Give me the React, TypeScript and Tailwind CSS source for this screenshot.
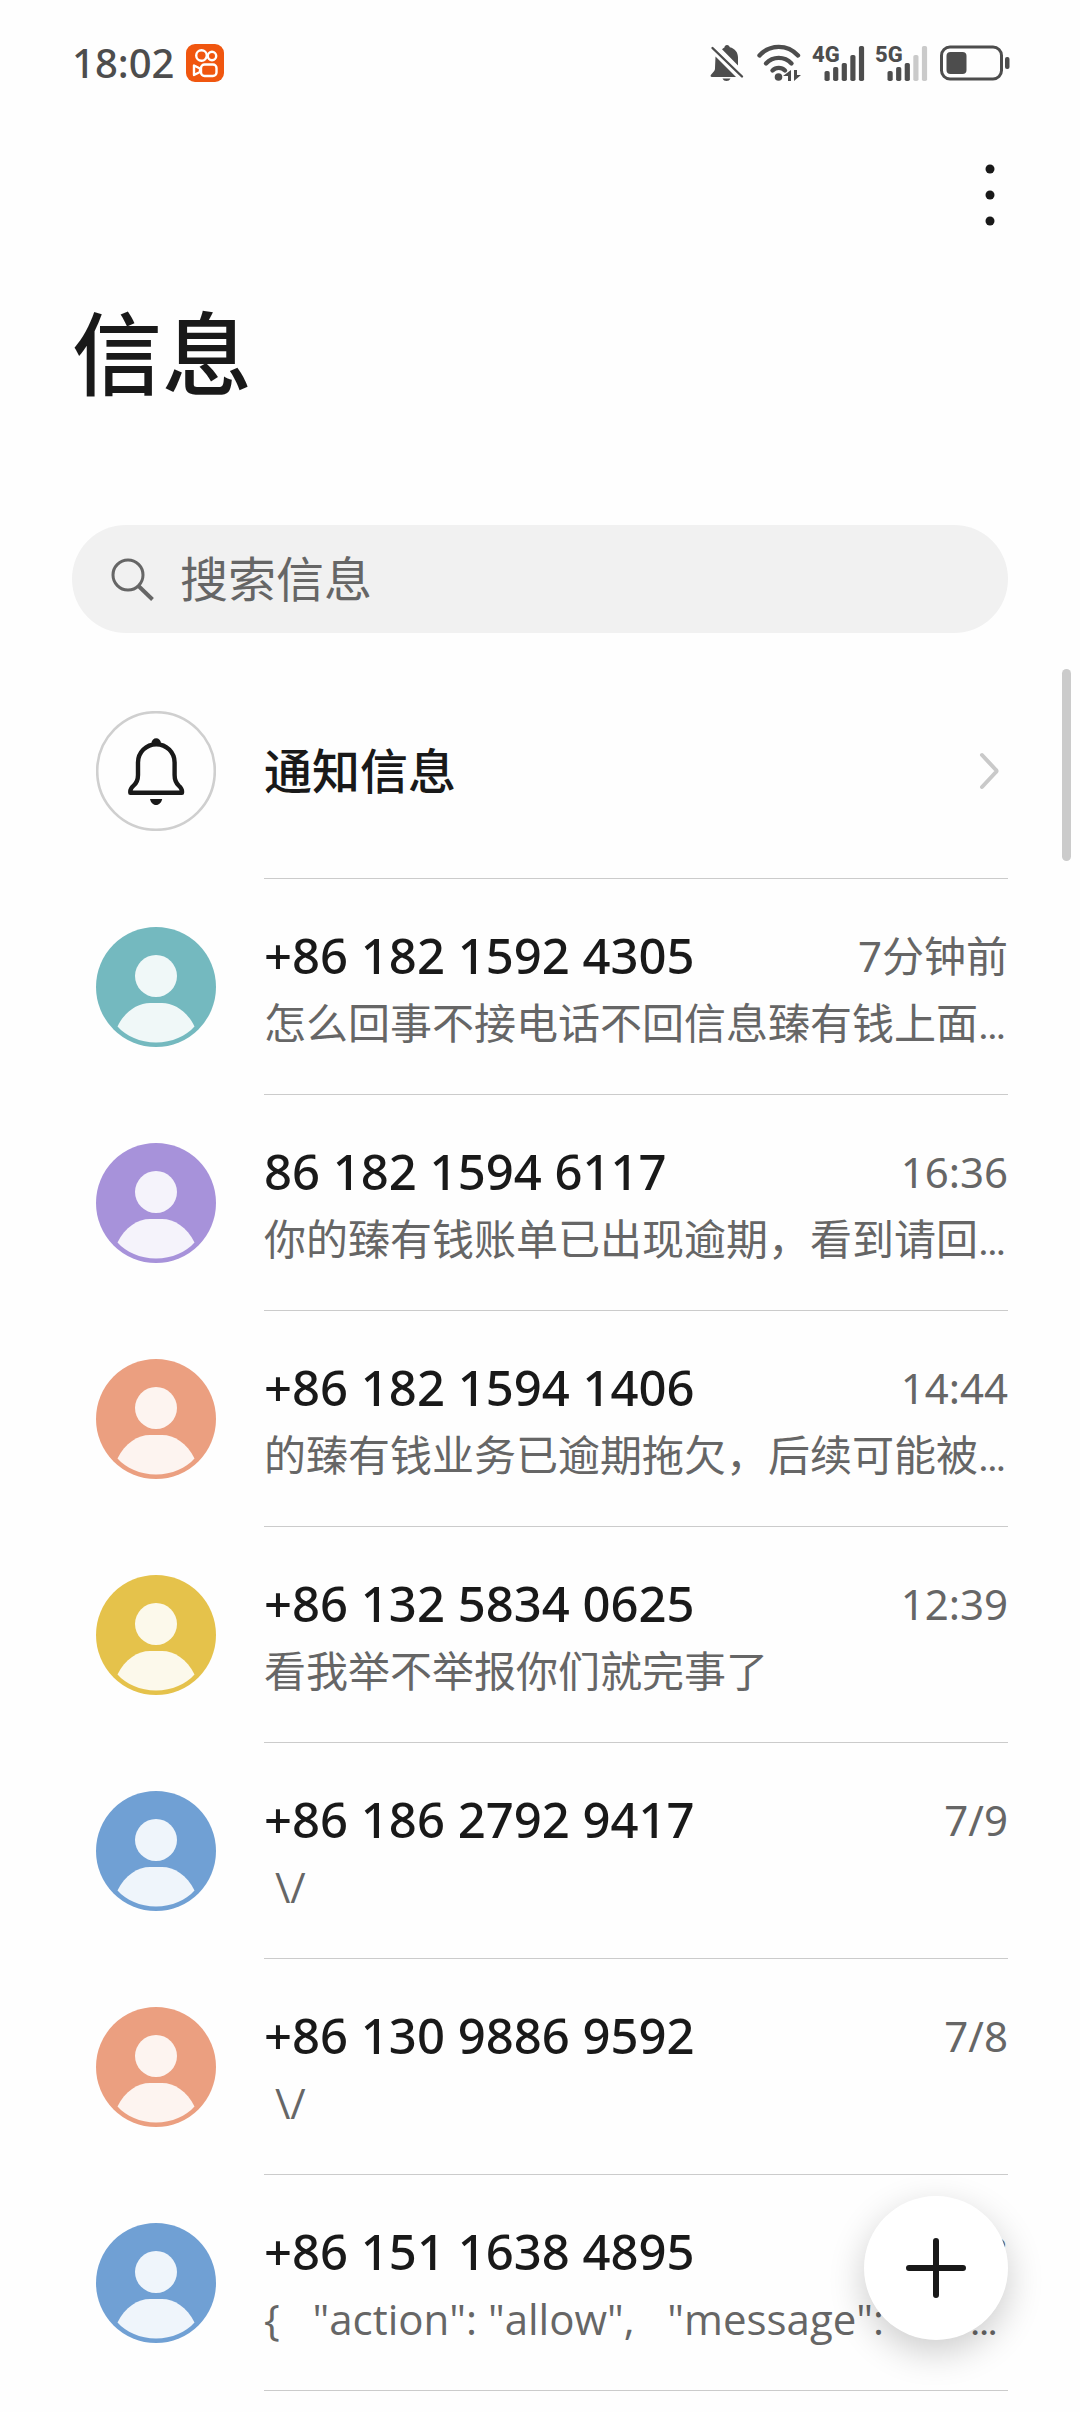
import { useState } from 'react';

interface Conversation {
  id: number;
  sender: string;
  preview: string;
  clipped?: boolean;
  time: string;
  avatar: string;
  person: string;
}

const conversations: Conversation[] = [
  { id: 1, sender: '+86 182 1592 4305', preview: '怎么回事不接电话不回信息臻有钱上面', clipped: true, time: '7分钟前', avatar: 'bg-[#74b9bf]', person: 'text-[#f0f8f8]' },
  { id: 2, sender: '86 182 1594 6117', preview: '你的臻有钱账单已出现逾期，看到请回', clipped: true, time: '16:36', avatar: 'bg-[#a792da]', person: 'text-[#f5f3fb]' },
  { id: 3, sender: '+86 182 1594 1406', preview: '的臻有钱业务已逾期拖欠，后续可能被', clipped: true, time: '14:44', avatar: 'bg-[#eb9f80]', person: 'text-[#fdf4f0]' },
  { id: 4, sender: '+86 132 5834 0625', preview: '看我举不举报你们就完事了', time: '12:39', avatar: 'bg-[#e5c24b]', person: 'text-[#fcf9eb]' },
  { id: 5, sender: '+86 186 2792 9417', preview: ' \\/', time: '7/9', avatar: 'bg-[#70a0d4]', person: 'text-[#eff5fb]' },
  { id: 6, sender: '+86 130 9886 9592', preview: ' \\/', time: '7/8', avatar: 'bg-[#eb9f80]', person: 'text-[#fdf4f0]' },
  { id: 7, sender: '+86 151 1638 4895', preview: '{   "action": "allow",   "message": "err', clipped: true, time: '7/8', avatar: 'bg-[#70a0d4]', person: 'text-[#eff5fb]' },
];

function StatusBar() {
  return (
    <div className="flex h-[126px] items-center justify-between pl-18 pr-[70px] text-[#4d4d4d]">
      <div className="flex items-center gap-3">
        <span className="text-[40px] leading-none font-medium">18:02</span>
        <svg width="38" height="38" viewBox="0 0 38 38" fill="none" stroke="#fff" strokeWidth="2.4">
          <rect width="38" height="38" rx="9" fill="#f0560f" stroke="none" />
          <circle cx="15.5" cy="11.5" r="5.3" />
          <circle cx="26" cy="12" r="4.2" />
          <rect x="15" y="20.5" width="15.5" height="11.5" rx="3.5" />
          <path d="M8 21.5v9.5l6-3v-3.5z" strokeLinejoin="round" />
        </svg>
      </div>

      <div className="flex items-center">
        <svg className="mr-3" width="34" height="38" viewBox="0 0 34 38">
          <path d="M17 1c1.5 0 2.5 1 2.8 2.300C25 4.500 28 8.500 28 13.500v8L12 5.200c.8-.8 1.700-1.400 2.400-1.800C14.600 2 15.500 1 17 1z" fill="currentColor" />
          <path d="M5.500 12.500 26 33H2c-1.500 0-1.800-1.200-1-2.200l3-3.500c.8-1 1-2 1-3.300z" fill="currentColor" />
          <path d="M12.500 34.500h8c-.8 1.700-2.200 2.500-4 2.500s-3.300-.8-4-2.500z" fill="currentColor" />
          <path d="M2.500 4 32 32.500" stroke="currentColor" strokeWidth="2.4" strokeLinecap="round" />
        </svg>
        <svg className="mr-2.5" width="46" height="38" viewBox="0 0 46 38">
          <g fill="none" stroke="currentColor" strokeWidth="4.4" strokeLinecap="round">
            <path d="M3.500 11.500c10.500-11.500 28-11.500 38.500 0" />
            <path d="M10 19.500c7-7.500 18.500-7.500 25.500 0" />
            <path d="M16.500 26.500c3.500-3.500 9-3.500 12.500 0" />
          </g>
          <circle cx="22.5" cy="33" r="3.8" fill="currentColor" />
          <path d="M35 26v11h-3v-5h-5zM38 26v11l7-6h-4v-5z" fill="currentColor" />
        </svg>
        <SignalIcon label="4G" strength={5} />
        <SignalIcon label="5G" strength={3} />
        <svg className="ml-0.5" width="70" height="38" viewBox="0 0 70 38">
          <rect x="1.5" y="3" width="60" height="32" rx="8.5" fill="none" stroke="currentColor" strokeWidth="3" />
          <rect x="6.5" y="8" width="20" height="22" rx="4" fill="currentColor" />
          <rect x="65" y="13" width="4.5" height="12" rx="2" fill="currentColor" />
        </svg>
      </div>
    </div>
  );
}

function SignalIcon({ label, strength }: { label: string; strength: number }) {
  const heights = [10, 14, 18, 26, 35];
  return (
    <svg className="mr-2.5" width="53" height="54" viewBox="0 -8 53 54" fill="currentColor">
      <text x="0" y="18" fontSize="22" fontWeight="800" fontFamily="Roboto, sans-serif">{label}</text>
      {heights.map((h, i) => (
        <rect key={h} x={12.5 + i * 8.6} y={37 - h} width="5.2" height={h} rx="1.8" fill={i < strength ? 'currentColor' : '#cacaca'} />
      ))}
    </svg>
  );
}

function Avatar({ bg, person }: { bg: string; person: string }) {
  return (
    <div className={`size-[120px] shrink-0 rounded-full ${bg}`}>
      <svg className={person} viewBox="0 0 120 120" fill="currentColor">
        <circle cx="60" cy="49" r="21" />
        <path d="M21.5 99.500C29 84 42 76 54 76h12c12 0 25 8 32.500 23.500C90 109 76 115.500 60 115.500S30 109 21.500 99.500z" />
      </svg>
    </div>
  );
}

function ConversationRow({ item }: { item: Conversation }) {
  return (
    <li>
      <a href={`#thread-${item.id}`} className="flex h-54 items-center gap-12 pl-6">
        <Avatar bg={item.avatar} person={item.person} />
        <div className="flex h-full min-w-0 flex-1 flex-col justify-center border-b border-[#cbcbcb]">
          <div className="flex h-[72px] items-center justify-between">
            <span className="text-[49px] leading-none font-medium text-[#191919]">{item.sender}</span>
            <time className="text-[42px] leading-none text-[#666]">{item.time}</time>
          </div>
          <p className="h-[62px] font-['Open_Sans','Noto_Sans_CJK_SC',sans-serif] text-[42px] leading-[62px] whitespace-pre text-[#666]">
            {item.preview}
            {item.clipped && <span className="font-[Roboto,sans-serif] leading-none">…</span>}
          </p>
        </div>
      </a>
    </li>
  );
}

export default function App() {
  const [query, setQuery] = useState('');

  return (
    <div className="relative min-h-screen bg-[#fefefe] font-['Noto_Sans','Noto_Sans_CJK_SC',sans-serif] text-[#191919]">
      <StatusBar />

      {/* Toolbar */}
      <div className="flex h-[138px] justify-end pr-14">
        <button type="button" aria-label="更多" className="flex h-[138px] w-17 justify-center">
          <svg width="10" height="138" viewBox="0 0 10 138" fill="currentColor">
            <circle cx="5" cy="43" r="4.5" />
            <circle cx="5" cy="69" r="4.5" />
            <circle cx="5" cy="95" r="4.5" />
          </svg>
        </button>
      </div>

      <main className="px-18">
        <h1 className="h-[261px] pt-5 font-['Noto_Sans_CJK_SC',sans-serif] text-[90px] leading-[130px] font-medium">信息</h1>

        <label className="flex h-27 items-center gap-6 rounded-full bg-[#f1f1f1] px-9">
          <svg width="48" height="48" viewBox="0 0 48 48" fill="none" stroke="#666" strokeWidth="3">
            <circle cx="20" cy="20" r="15" />
            <path d="m30.500 31 14 13.500" strokeWidth="4" />
          </svg>
          <input
            type="text"
            aria-label="搜索信息"
            value={query}
            onChange={(e) => setQuery(e.target.value)}
            placeholder="搜索信息"
            className="min-w-0 flex-1 text-5xl leading-[72px] outline-none placeholder:text-[#666]"
          />
        </label>

        <ul className="pt-[30px]">
          <li>
            <a href="#notifications" className="flex h-54 items-center gap-12 pl-6">
              <span className="size-[120px] shrink-0">
                <svg viewBox="0 0 120 120" fill="none">
                  <circle cx="60" cy="60" r="58.8" stroke="#cfcfcf" strokeWidth="2.6" />
                  <path
                    d="M42 64V51.500a18.300 18.300 0 0 1 36.600 0V64c0 5 1.500 8 4 10.500 2.600 2.400 3.400 3.500 3.400 5.500v1.700H34.300V80c0-2 .8-3.100 3.400-5.500C40.500 72 42 69 42 64z"
                    stroke="currentColor"
                    strokeWidth="4.4"
                    strokeLinejoin="round"
                  />
                  <path d="M55.500 32a4.700 4.700 0 0 1 9.400 0zM54 88h12.200c-.8 3.500-3 6-6.100 6s-5.300-2.500-6.100-6z" fill="currentColor" />
                </svg>
              </span>
              <span className="flex h-full flex-1 items-center justify-between border-b border-[#cbcbcb]">
                <span className="text-5xl leading-none font-medium">通知信息</span>
                <svg className="mr-2" width="22" height="40" viewBox="0 0 22 40" fill="none" stroke="#c9c9c9" strokeWidth="4" strokeLinecap="round" strokeLinejoin="round">
                  <path d="m4 4 14 15q1 1 0 2L4 36" />
                </svg>
              </span>
            </a>
          </li>
          {conversations.map((c) => (
            <ConversationRow key={c.id} item={c} />
          ))}
        </ul>
      </main>

      {/* Scroll thumb */}
      <div className="absolute top-[669px] right-[9px] h-48 w-[9px] rounded-full bg-[#cbcbcb]" />

      {/* New message */}
      <button
        type="button"
        aria-label="新建信息"
        className="fixed right-18 bottom-18 flex size-36 items-center justify-center rounded-full bg-white shadow-[0_12px_36px_rgba(0,0,0,0.2)]"
      >
        <svg width="62" height="62" viewBox="0 0 62 62" stroke="currentColor" strokeWidth="6" strokeLinecap="round">
          <path d="M31 4v54M4 31h54" />
        </svg>
      </button>
    </div>
  );
}
